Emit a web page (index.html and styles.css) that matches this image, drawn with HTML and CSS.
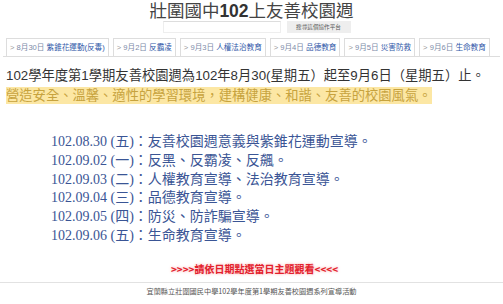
FILE: index.html
```html
<!DOCTYPE html>
<html lang="zh-Hant">
<head>
    <meta charset="UTF-8">
    <meta name="viewport" content="width=device-width, initial-scale=1.0">
    <title>壯圍國中102上友善校園週</title>
    <link rel="stylesheet" href="styles.css">
</head>
<body>
    <div class="header">
        <h1 class="site-title">壯圍國中<b>102</b>上友善校園週</h1>
        <div class="search">
            <input class="search-box" type="text">
            <button class="search-btn">搜尋這個協作平台</button>
        </div>
    </div>
    <div class="tabs">
        <a class="tab" href="#"><span class="arrow">&gt;</span> <span class="date">8月30日</span> 紫錐花運動(反毒)</a>
        <a class="tab" href="#"><span class="arrow">&gt;</span> <span class="date">9月2日</span> 反霸凌</a>
        <a class="tab" href="#"><span class="arrow">&gt;</span> <span class="date">9月3日</span> 人權法治教育</a>
        <a class="tab" href="#"><span class="arrow">&gt;</span> <span class="date">9月4日</span> 品德教育</a>
        <a class="tab" href="#"><span class="arrow">&gt;</span> <span class="date">9月5日</span> 災害防救</a>
        <a class="tab" href="#"><span class="arrow">&gt;</span> <span class="date">9月6日</span> 生命教育</a>
    </div>
    <div class="content">
        <p class="intro">102學年度第1學期友善校園週為102年8月30(星期五）起至9月6日（星期五）止。</p>
        <p class="goal"><span class="mark">營造安全、溫馨、適性的學習環境，建構健康、和諧、友善的校園風氣。</span></p>
        <ul class="schedule">
            <li>102.08.30 (五)：友善校園週意義與紫錐花運動宣導。</li>
            <li>102.09.02 (一)：反黑、反霸凌、反飆。</li>
            <li>102.09.03 (二)：人權教育宣導、法治教育宣導。</li>
            <li>102.09.04 (三)：品德教育宣導。</li>
            <li>102.09.05 (四)：防災、防詐騙宣導。</li>
            <li>102.09.06 (五)：生命教育宣導。</li>
        </ul>
        <p class="notice">&gt;&gt;&gt;&gt;請依日期點選當日主題觀看&lt;&lt;&lt;&lt;</p>
    </div>
    <div class="footer">宜蘭縣立壯圍國民中學102學年度第1學期友善校園週系列宣導活動</div>
</body>
</html>
```

FILE: styles.css
```css
body {
    margin: 0;
    background-color: white;
    color: #333;
    font-family: "Liberation Sans", "Noto Sans CJK TC", sans-serif;
}
.header {
    display: flex;
    flex-direction: column;
    align-items: center;
}
.site-title {
    margin: 1px 0 0 0;
    font-size: 17.5px;
    line-height: 20px;
    font-weight: normal;
    color: #444;
}
.site-title b {
    color: #333;
}
.search {
    display: flex;
    gap: 6px;
    margin-left: 10px;
}
.search-box {
    width: 116px;
    height: 10px;
    margin: 0;
    padding: 0;
    border: 1px solid #eee;
    border-top-color: #ddd;
}
.search-btn {
    height: 12px;
    width: 64px;
    margin: 0;
    padding: 0;
    border: none;
    background-color: #eee;
    color: #555;
    font-family: "Noto Sans CJK TC", sans-serif;
    font-size: 5.6px;
    line-height: 12px;
}
.tabs {
    display: flex;
    gap: 4px;
    margin: 5px 3px 0 3px;
    padding-left: 3px;
    border-bottom: 1px solid #ddd;
}
.tab {
    height: 17px;
    padding: 0 3px;
    border: 1px solid #ddd;
    border-bottom: none;
    font-size: 7.6px;
    line-height: 17px;
    color: #3058a8;
    text-decoration: none;
    white-space: nowrap;
}
.tab .arrow {
    color: #999;
}
.tab .date {
    color: #7d8ba8;
}
.content {
    padding-left: 6px;
}
.intro {
    margin: 9px 0 0 0;
    font-size: 13.3px;
    line-height: 20px;
}
.goal {
    margin: 0;
    font-size: 13.3px;
    line-height: 20px;
}
.mark {
    background-color: #fce7a4;
    color: #c7a33e;
    padding: 1px 0;
}
.schedule {
    list-style: none;
    margin: 27px 0 0 45px;
    padding: 0;
    font-family: "Liberation Serif", "Noto Sans CJK TC", serif;
    font-size: 14px;
    line-height: 18.8px;
    color: #3a5595;
}
.notice {
    margin: 16px 0 0 0;
    text-align: center;
    font-family: "Noto Sans CJK TC", sans-serif;
    font-size: 10px;
    font-weight: bold;
    line-height: 14px;
    color: #e3202c;
    text-shadow: 0 0 3px #f7a3a3;
}
.footer {
    margin: 6px 0 0 0;
    border-top: 1px solid #e2e2e2;
    padding-top: 2px;
    text-align: center;
    font-family: "Noto Sans CJK TC", sans-serif;
    font-size: 7.2px;
    line-height: 12px;
    color: #555;
}
```
